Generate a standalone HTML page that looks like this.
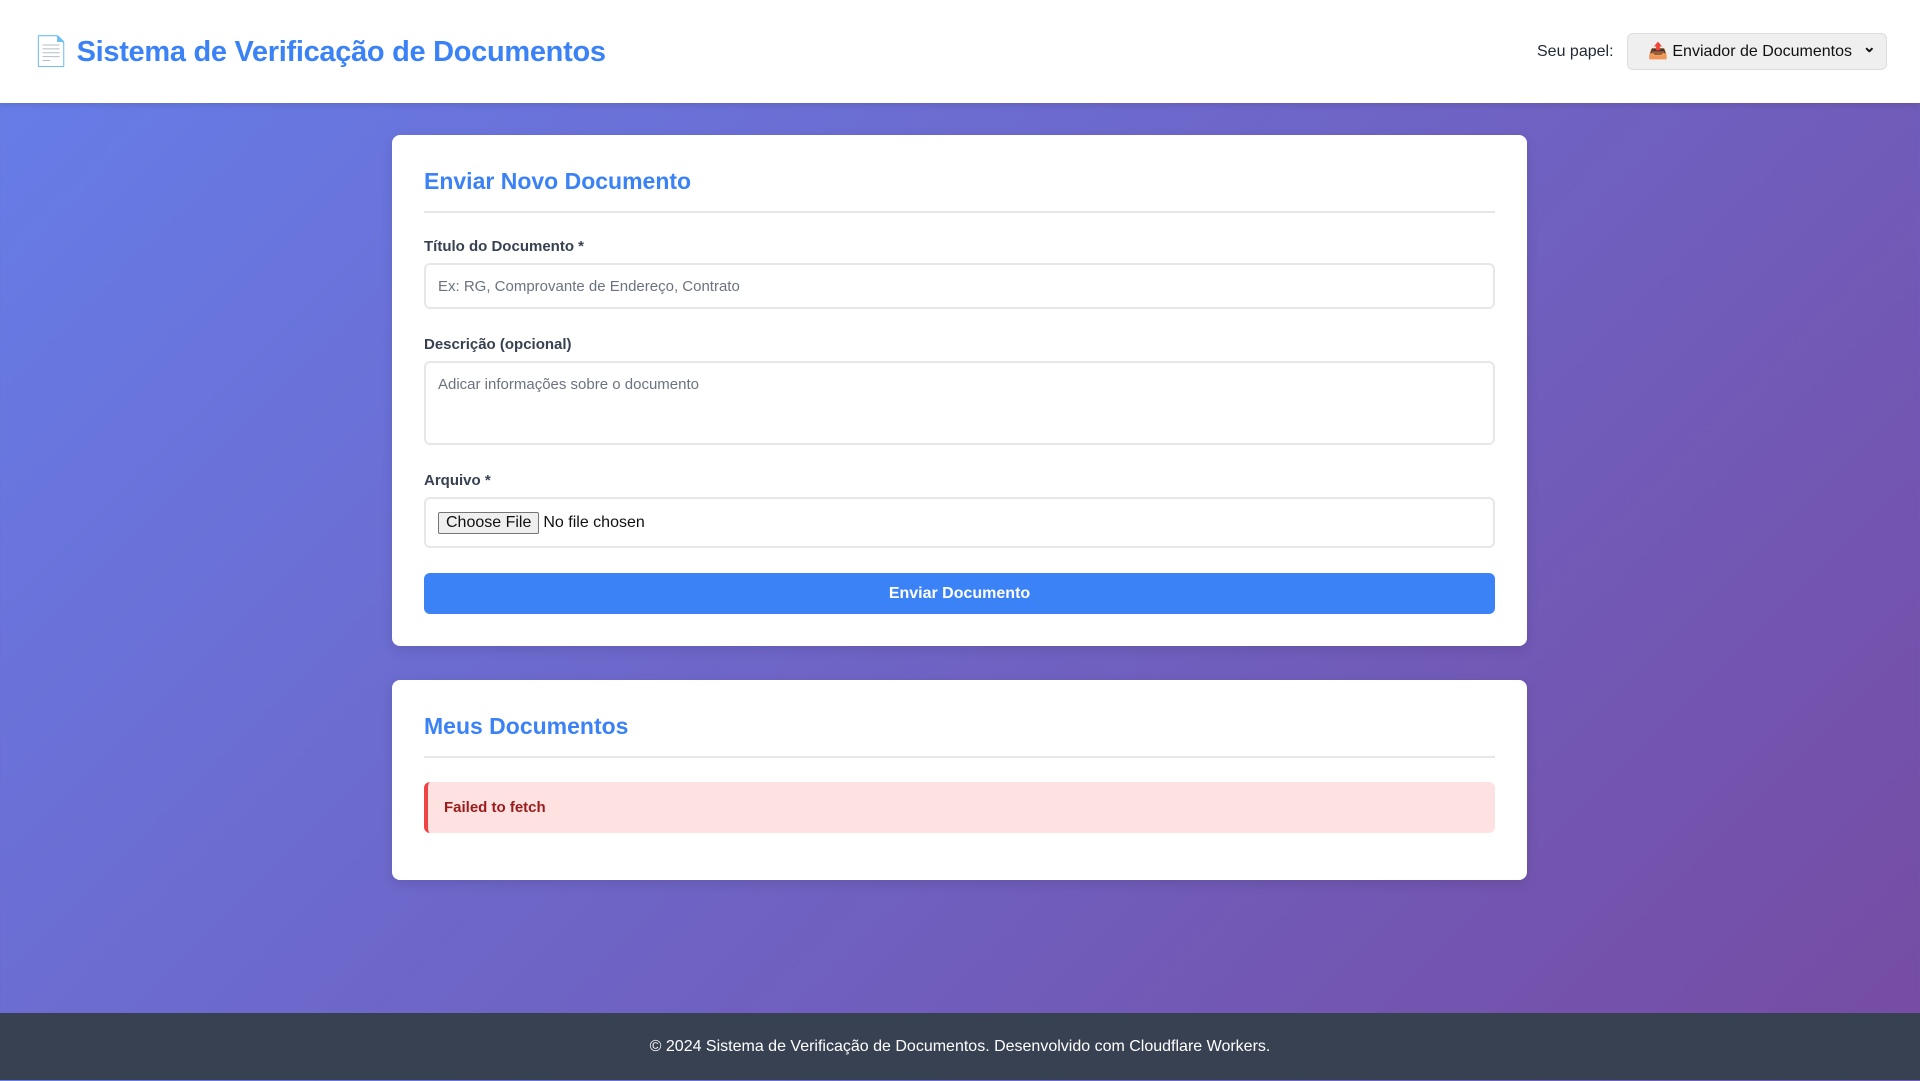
<!DOCTYPE html>
<html><head><meta charset="utf-8"><style>
*{box-sizing:border-box;margin:0;padding:0}
body{width:1920px;height:1080px;font-family:"Liberation Sans",sans-serif;background:linear-gradient(135deg,#667eea 0%,#764ba2 100%);position:relative;overflow:hidden;color:#1f2937}
header{position:absolute;left:0;top:0;width:1920px;height:103px;background:#fff;box-shadow:0 2px 6px rgba(0,0,0,.1)}
.title{position:absolute;left:33px;top:34px;font-size:29px;font-weight:bold;color:#3b82f6;line-height:36px;letter-spacing:-0.3px}
.role{position:absolute;left:1537px;top:43px;font-size:16px;color:#1f2937}
.sel{position:absolute;left:1627px;top:33px;width:260px;height:37px;background:#efefef;border:1px solid #ddd;border-radius:6px;font-size:16px;line-height:36px;padding-left:20px;color:#111}
.sel:after{content:"⌄";position:absolute;right:10px;top:-4px;font-weight:bold}
.card{position:absolute;left:392px;width:1135px;background:#fff;border-radius:8px;padding:32px;box-shadow:0 4px 12px rgba(0,0,0,.1)}
h2{font-size:23px;color:#3b82f6;line-height:29px;padding-bottom:15px;border-bottom:2px solid #e5e7eb}
label{display:block;font-size:15px;font-weight:bold;color:#374151;line-height:18px;margin:25px 0 7px}
.in{border:2px solid #e5e7eb;border-radius:6px;font-size:15px;color:#6b7280;padding:0 12px}
.btn{margin-top:25px;height:41px;background:#3b82f6;border-radius:6px;color:#fff;font-weight:bold;font-size:16px;text-align:center;line-height:42px}
.err{margin-top:24px;height:51px;background:#fee2e2;border-left:4px solid #ef4444;border-radius:6px;color:#991b1b;font-size:15px;font-weight:bold;line-height:52px;padding-left:16px}
footer{position:absolute;left:0;top:1013px;width:1920px;height:67px;background:#374151;color:#fff;text-align:center;font-size:16px;line-height:68px}
</style></head><body>
<header><div class="title">📄 Sistema de Verificação de Documentos</div>
<div class="role">Seu papel:</div><div class="sel">📤 Enviador de Documentos</div></header>
<div class="card" style="top:135px">
<h2>Enviar Novo Documento</h2>
<label>Título do Documento *</label>
<div class="in" style="height:46px;line-height:44px">Ex: RG, Comprovante de Endereço, Contrato</div>
<label style="margin-top:27px">Descrição (opcional)</label>
<div class="in" style="height:84px;padding-top:13px;line-height:18px">Adicar informações sobre o documento</div>
<label style="margin-top:27px">Arquivo *</label>
<div class="in" style="height:51px;padding-top:13px;color:#111;font-size:16px"><span style="display:inline-block;background:#efefef;border:1px solid #767676;border-radius:2px;padding:1px 7px;margin-right:4px;font-size:16px">Choose File</span>No file chosen</div>
<div class="btn">Enviar Documento</div>
</div>
<div class="card" style="top:680px;height:200px">
<h2>Meus Documentos</h2>
<div class="err">Failed to fetch</div>
</div>
<footer>© 2024 Sistema de Verificação de Documentos. Desenvolvido com Cloudflare Workers.</footer>
</body></html>
